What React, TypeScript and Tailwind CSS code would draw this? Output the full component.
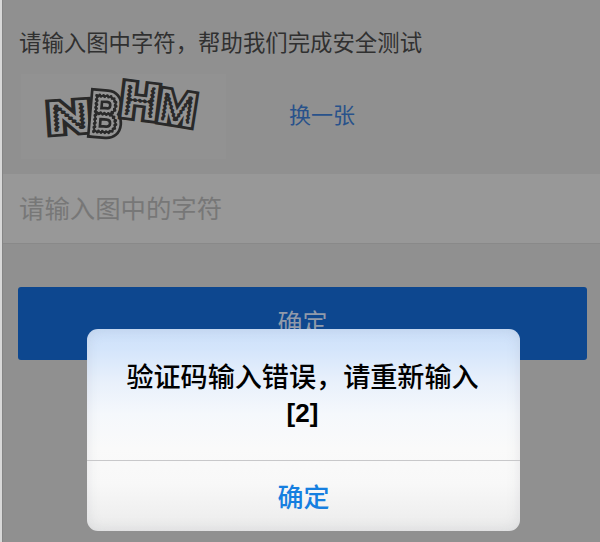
const captcha = [
  { char: 'N', x: 69, y: 117, rotate: -4, size: 34, width: 38 },
  { char: 'B', x: 105, y: 114, rotate: 5, size: 51, width: 31 },
  { char: 'H', x: 140, y: 101, rotate: 7, size: 39, width: 35 },
  { char: 'M', x: 177, y: 108, rotate: 9, size: 36, width: 34 },
]

// Dark edge, light body, centre line, then the stitching
const layers = [
  { stroke: '#292929', strokeWidth: 13, dash: undefined },
  { stroke: '#949494', strokeWidth: 7.4, dash: undefined },
  { stroke: '#292929', strokeWidth: 0.5, dash: undefined },
  { stroke: '#292929', strokeWidth: 3, dash: '0 4' },
]

function CaptchaImage() {
  return (
    <svg
      className="h-[85px] w-[205px] bg-[#929292] font-['Inter',sans-serif] font-thin"
      viewBox="21 74 205 85"
      role="img"
      aria-label="NBHM"
      textAnchor="middle"
    >
      {captcha.map(({ char, x, y, rotate, size, width }) => (
        <g key={char} transform={`translate(${x} ${y}) rotate(${rotate})`}>
          {layers.map((layer, i) => (
            <text
              key={i}
              y={size * 0.364}
              fontSize={size}
              textLength={width}
              lengthAdjust="spacingAndGlyphs"
              fill={layer.stroke}
              stroke={layer.stroke}
              strokeWidth={layer.strokeWidth}
              strokeDasharray={layer.dash}
              strokeLinecap={layer.dash ? 'round' : 'butt'}
              strokeLinejoin="miter"
              strokeMiterlimit="2"
            >
              {char}
            </text>
          ))}
        </g>
      ))}
    </svg>
  )
}

function AlertDialog() {
  return (
    <div
      role="alertdialog"
      className="absolute left-[87px] top-[329px] flex h-[202px] w-[433px] flex-col overflow-hidden rounded-[11px] bg-[linear-gradient(to_bottom,#cce0fa_0,#d4e5fb_20px,#e8f0fb_52px,#f5f8fc_85px,#fafafa_120px,#f8f8f8_155px,#ebebeb_202px)] shadow-[inset_0_0_14px_rgba(110,120,130,0.16)]"
    >
      <div className="flex h-[132px] flex-col items-center border-b border-[#c8c8ca] pr-0.5 pt-[29px] text-black">
        <p className="h-[37px] whitespace-nowrap text-[27.1px] font-medium leading-9">验证码输入错误，请重新输入</p>
        <p className="h-9 font-['Liberation_Sans',sans-serif] text-[26px] font-bold leading-9">[2]</p>
      </div>
      <button className="flex-1 pb-0.5 text-[26px] font-medium text-[#167fe0]">确定</button>
    </div>
  )
}

export default function App() {
  return (
    <main className="relative h-[542px] w-[600px] overflow-hidden border-l-2 border-[#d8d8d8] bg-[#909090] font-['Noto_Sans_CJK_SC',sans-serif]">
      <div className="flex h-full flex-col border-l border-[#858585]">
        <section className="h-[174px] pl-4 pt-[25px]">
          <h1 className="h-8 whitespace-nowrap text-[22.4px] leading-8 text-[#303030]">
            请输入图中字符，帮助我们完成安全测试
          </h1>
          <div className="mt-[17px] flex items-start gap-[63px] pl-0.5">
            <CaptchaImage />
            <button className="mt-[23px] h-8 text-[22px] leading-8 text-[#28528b]">换一张</button>
          </div>
        </section>
        <input
          className="h-[70px] w-full shrink-0 border-b border-[#898989] bg-[#989898] px-4 pb-[3px] text-[25.4px] outline-none placeholder:text-[#777777]"
          placeholder="请输入图中的字符"
        />
        <button className="ml-[15px] mt-[43px] h-[73px] w-[569px] shrink-0 rounded-[3px] bg-[#0d478f] pb-[3px] text-[25px] text-[#909aaa]">
          确定
        </button>
      </div>
      <div className="absolute -left-0.5 top-0">
        <AlertDialog />
      </div>
    </main>
  )
}
